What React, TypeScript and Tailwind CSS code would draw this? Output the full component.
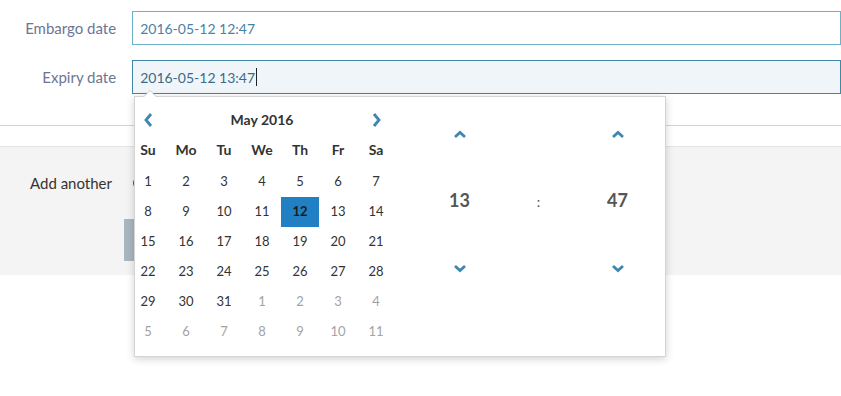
import React from "react";

const weeks = [
  [1, 2, 3, 4, 5, 6, 7],
  [8, 9, 10, 11, 12, 13, 14],
  [15, 16, 17, 18, 19, 20, 21],
  [22, 23, 24, 25, 26, 27, 28],
  [29, 30, 31, 1, 2, 3, 4],
  [5, 6, 7, 8, 9, 10, 11],
];

const dayNames = ["Su", "Mo", "Tu", "We", "Th", "Fr", "Sa"];

const Chevron = ({ dir }: { dir: "left" | "right" | "up" | "down" }) => {
  const paths: Record<string, string> = {
    left: "M8 1 L3 7 L8 13",
    right: "M3 1 L8 7 L3 13",
    up: "M2 8 L7 3.5 L12 8",
    down: "M2 3 L7 7.5 L12 3",
  };
  const horizontal = dir === "left" || dir === "right";
  return (
    <svg
      width={horizontal ? 11 : 14}
      height={horizontal ? 14 : 11}
      viewBox={horizontal ? "0 0 11 14" : "0 0 14 11"}
      fill="none"
      stroke="#3f86b0"
      strokeWidth="2.8"
      strokeLinecap="butt"
      strokeLinejoin="miter"
    >
      <path d={paths[dir]} />
    </svg>
  );
};

const DatePicker = () => {
  return (
    <div className="absolute left-[134px] top-[96px] w-[532px] h-[261px] bg-white border border-[#d4d4d4] shadow-[0_2px_8px_rgba(0,0,0,0.18)] flex">
      {/* caret */}
      <div className="absolute left-[8px] -top-[7px] w-0 h-0 border-l-[7px] border-r-[7px] border-b-[7px] border-l-transparent border-r-transparent border-b-[#cccccc]" />
      <div className="absolute left-[9px] -top-[6px] w-0 h-0 border-l-[6px] border-r-[6px] border-b-[6px] border-l-transparent border-r-transparent border-b-white" />

      <div className="-ml-[6px] pt-[7px] text-[13px] text-[#333]">
        <div className="grid grid-cols-[repeat(7,38px)] h-[30px] items-center">
          <div className="flex justify-center pt-[2px]">
            <Chevron dir="left" />
          </div>
          <div className="col-span-5 text-center text-[14px] font-bold text-[#333]">May 2016</div>
          <div className="flex justify-center pt-[2px]">
            <Chevron dir="right" />
          </div>
        </div>
        <div className="grid grid-cols-[repeat(7,38px)] h-[30px] items-center">
          {dayNames.map((d) => (
            <div key={d} className="text-center text-[14px] font-bold">
              {d}
            </div>
          ))}
        </div>
        <div className="pt-[3px]">
          {weeks.map((week, wi) => (
            <div key={wi} className="grid grid-cols-[repeat(7,38px)] h-[30px]">
              {week.map((day, di) => {
                const other = (wi === 4 && di > 2) || wi === 5;
                const selected = wi === 1 && di === 4;
                return (
                  <div
                    key={di}
                    className={
                      selected
                        ? "flex items-center justify-center bg-[#2180c4] text-[#1b1b1b] font-bold"
                        : other
                        ? "flex items-center justify-center text-[#a3a3a3]"
                        : "flex items-center justify-center"
                    }
                  >
                    {day}
                  </div>
                );
              })}
            </div>
          ))}
        </div>
      </div>

      <div className="ml-[25px] pt-[4px] flex text-[#555]">
        {[
          { value: "13", arrows: true },
          { value: ":", arrows: false },
          { value: "47", arrows: true },
        ].map((col, i) => (
          <div key={i} className="w-[79px] flex flex-col">
            <div className="h-[67px] flex items-center justify-center">
              {col.arrows && <Chevron dir="up" />}
            </div>
            <div
              className={
                col.arrows
                  ? "h-[67px] pb-[2px] flex items-center justify-center text-[18px] font-bold"
                  : "h-[67px] flex items-center justify-center text-[14px]"
              }
            >
              {col.value}
            </div>
            <div className="h-[67px] flex items-center justify-center">
              {col.arrows && <Chevron dir="down" />}
            </div>
          </div>
        ))}
      </div>
    </div>
  );
};

export default function App() {
  return (
    <div
      className="relative w-[841px] h-[396px] overflow-hidden bg-white"
      style={{ fontFamily: "Lato, 'Open Sans', sans-serif" }}
    >
      <div className="pt-[11px] flex flex-col gap-[15px]">
        <div className="flex items-center">
          <label className="w-[118px] text-right text-[15px] text-[#6d7595]">Embargo date</label>
          <div className="ml-[16px] w-[720px] h-[34px] border border-[#6fb0c9] flex items-center px-[7px] text-[14px] text-[#4a82a6]">
            2016-05-12 12:47
          </div>
        </div>
        <div className="flex items-center">
          <label className="w-[118px] text-right text-[15px] text-[#6d7595]">Expiry date</label>
          <div className="ml-[16px] w-[720px] h-[34px] border border-[#3f89a6] bg-[#eff5f8] flex items-center px-[7px] text-[14px] text-[#3a6b8b]">
            2016-05-12 13:47
            <span className="ml-[1px] w-[1px] h-[18px] bg-[#222]" />
          </div>
        </div>
      </div>

      <div className="mt-[31px] border-t border-[#cfd5dc]" />

      <div className="mt-[20px] h-[129px] bg-[#f4f4f4] border-t border-[#e2e5e8] flex flex-col">
        <div className="flex items-center h-[72px] pl-[30px] text-[15px] text-[#333]">
          <span className="w-[103px]">Add another</span>
          <span className="w-[14px] h-[14px] rounded-full border border-[#555]" />
        </div>
        <div className="ml-[124px] w-[120px] h-[42px] bg-[#a8b6c0]" />
      </div>

      <DatePicker />
    </div>
  );
}
